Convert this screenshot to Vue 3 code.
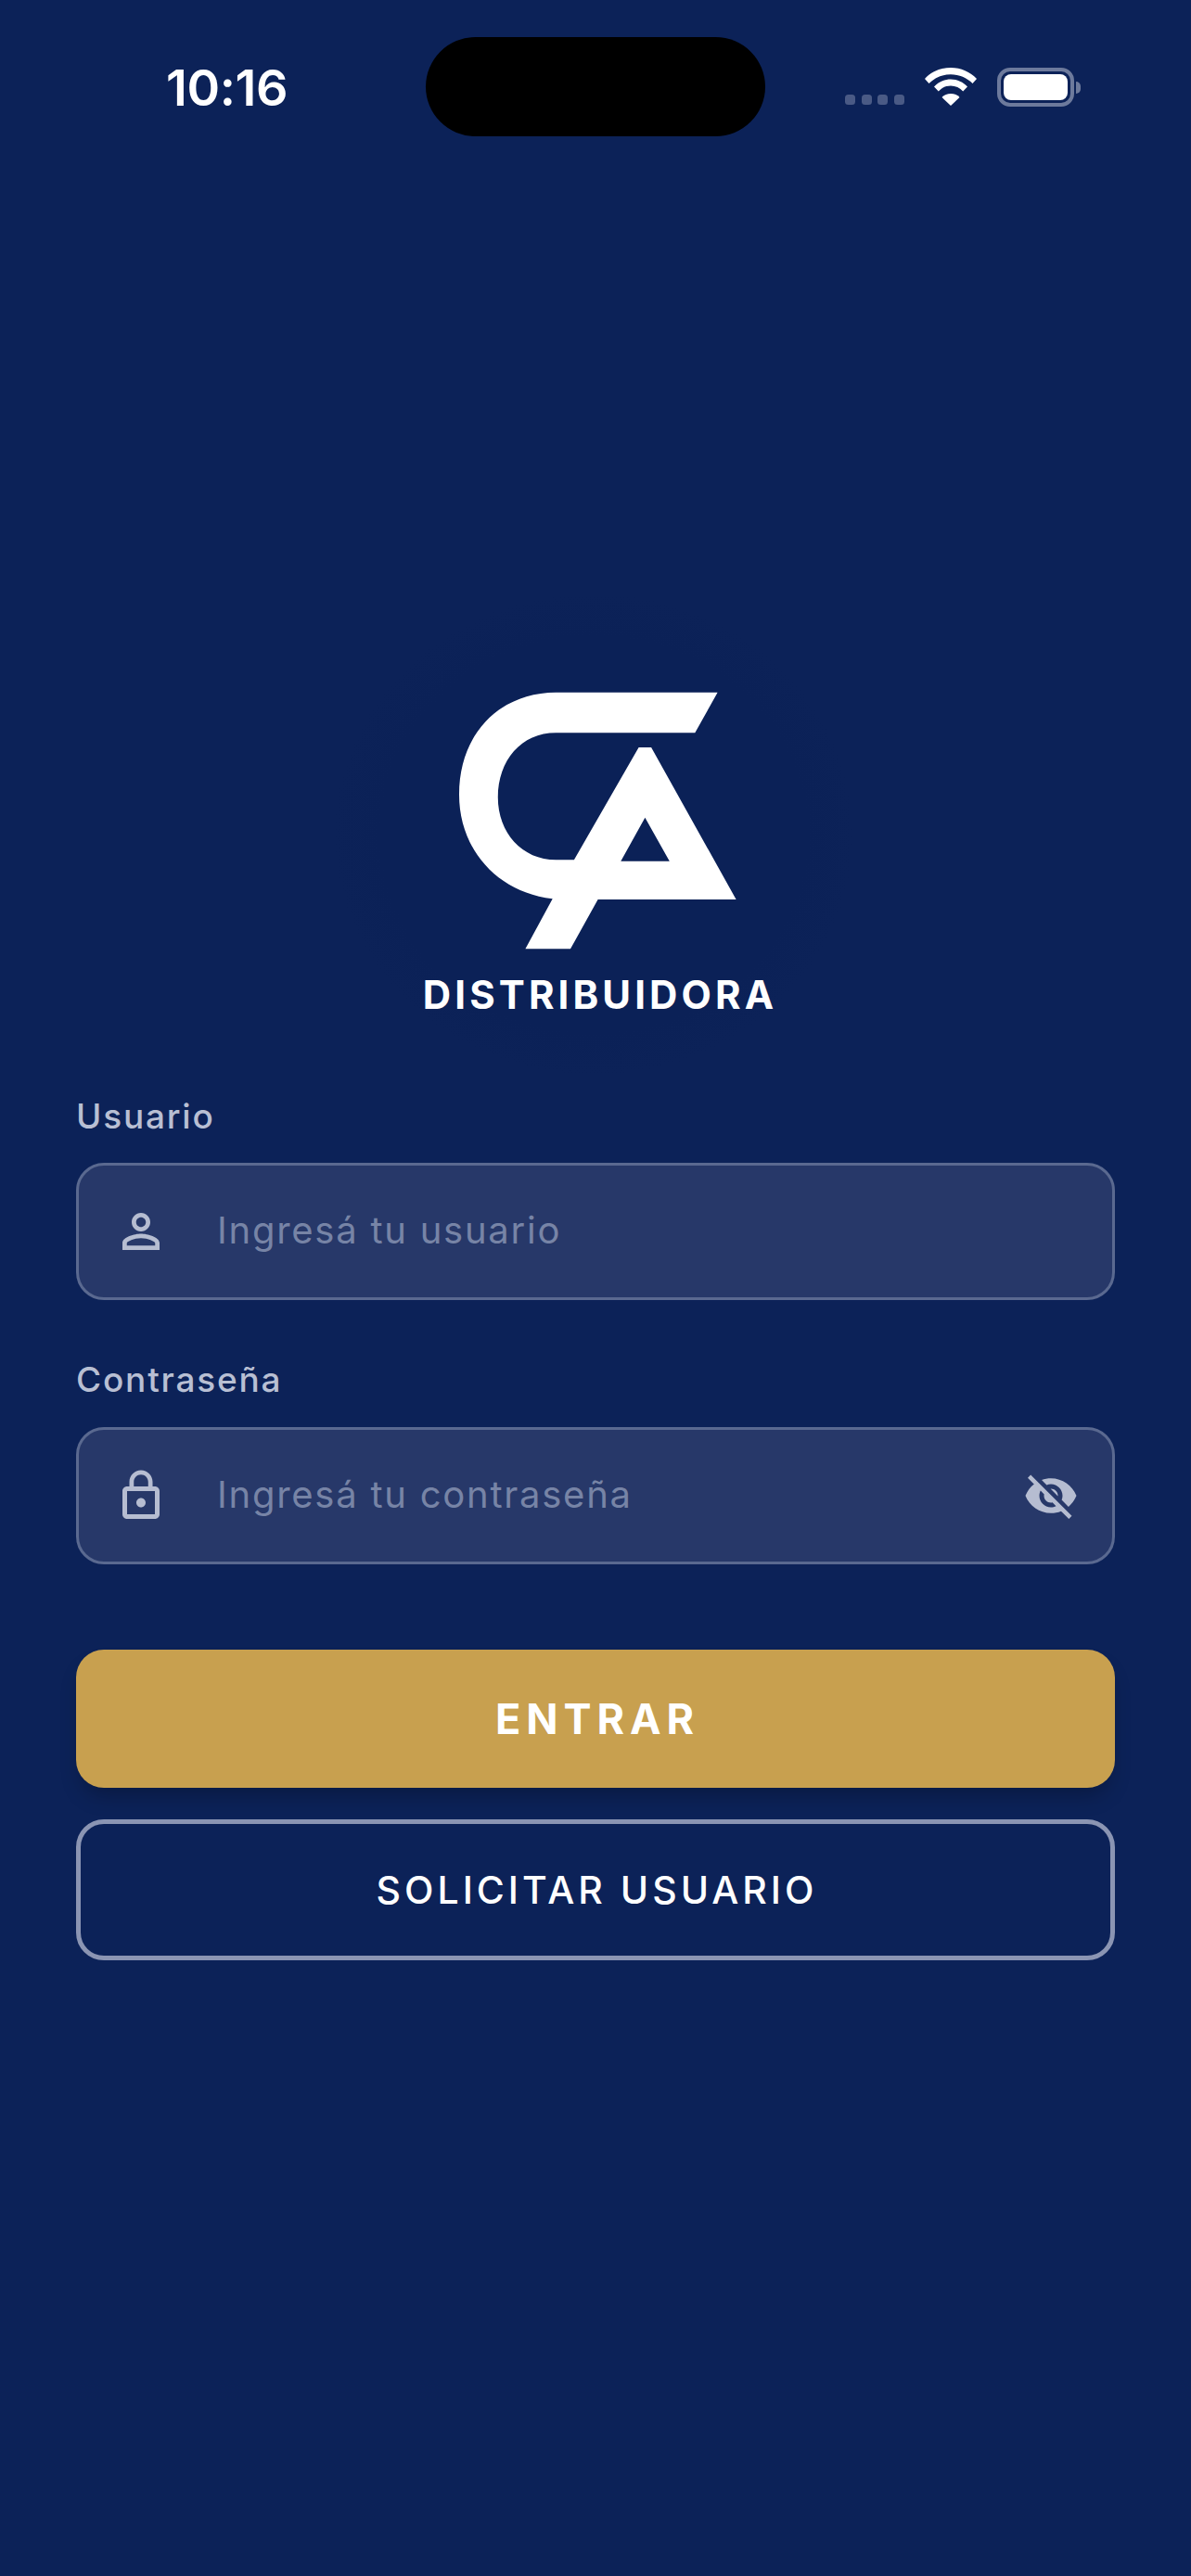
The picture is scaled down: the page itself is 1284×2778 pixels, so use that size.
<script setup>
const signalDots = [1, 2, 3, 4]
const personPath = 'M12 5.9c1.16 0 2.1.94 2.1 2.1s-.94 2.1-2.1 2.1S9.9 9.16 9.9 8s.94-2.1 2.1-2.1m0 9c2.97 0 6.1 1.46 6.1 2.1v1.1H5.9V17c0-.64 3.13-2.1 6.1-2.1M12 4C9.79 4 8 5.79 8 8s1.79 4 4 4 4-1.79 4-4-1.79-4-4-4zm0 9c-2.67 0-8 1.34-8 4v3h16v-3c0-2.66-5.33-4-8-4z'
const lockPath = 'M12 17c1.1 0 2-.9 2-2s-.9-2-2-2-2 .9-2 2 .9 2 2 2zm6-9h-1V6c0-2.76-2.24-5-5-5S7 3.24 7 6v2H6c-1.1 0-2 .9-2 2v10c0 1.1.9 2 2 2h12c1.1 0 2-.9 2-2V10c0-1.1-.9-2-2-2zM8.9 6c0-1.71 1.39-3.1 3.1-3.1s3.1 1.39 3.1 3.1v2H8.9V6zM18 20H6V10h12v10z'
const eyeOffPath = 'M12 7c2.76 0 5 2.24 5 5 0 .65-.13 1.26-.36 1.83l2.92 2.92c1.51-1.26 2.7-2.89 3.43-4.75-1.73-4.39-6-7.5-11-7.5-1.4 0-2.74.25-3.98.7l2.16 2.16C10.74 7.13 11.35 7 12 7zM2 4.27l2.28 2.28.46.46C3.08 8.3 1.78 10.02 1 12c1.73 4.39 6 7.5 11 7.5 1.55 0 3.03-.3 4.38-.84l.42.42L19.73 22 21 20.73 3.27 3 2 4.27zM7.53 9.8l1.55 1.55c-.05.21-.08.43-.08.65 0 1.66 1.34 3 3 3 .22 0 .44-.03.65-.08l1.55 1.55c-.67.33-1.41.53-2.2.53-2.76 0-5-2.24-5-5 0-.79.2-1.53.53-2.2zm4.31-.78l3.15 3.15.02-.16c0-1.66-1.34-3-3-3l-.17.01z'
</script>

<template>
  <div class="screen">
    <header class="status-bar">
      <span class="time">10:16</span>
      <div class="island"></div>
      <div class="status-icons">
        <div class="dots">
          <span v-for="d in signalDots" :key="d" class="dot"></span>
        </div>
        <svg class="wifi" width="56" height="41" viewBox="0 0 56 41">
          <path fill="#fff" d="M28 0C39 0 49 4.5 56 12L51.5 17C45.5 11 37 7.3 28 7.3C19 7.3 10.5 11 4.5 17L0 12C7 4.5 17 0 28 0Z" />
          <path fill="#fff" d="M28 12.5C35 12.5 41.5 15.5 46 20.5L41.2 25.5C38 21.5 33 19.5 28 19.5C23 19.5 18 21.5 14.8 25.5L10 20.5C14.5 15.5 21 12.5 28 12.5Z" />
          <path fill="#fff" d="M28 28C32 28 35.5 29.5 37.5 32L28 41L18.5 32C20.5 29.5 24 28 28 28Z" />
        </svg>
        <div class="battery"><div class="battery-fill"></div></div>
        <div class="battery-nub"></div>
      </div>
    </header>

    <div class="logo">
      <svg class="logo-mark" width="560" height="384" viewBox="0 0 560 384">
        <path
          fill="#fff"
          fill-rule="evenodd"
          d="M413.6 106.7L389.3 150.3H239.3C202 150.3 176.8 180 176.8 220C176.8 258 203 287.3 239.3 287.3H258.9L328.6 166H342.1L433.6 330H284.6L255 383.3H206.4L235.7 329.3C175 322 135 275 135 217C135 150 180 106.7 239.3 106.7ZM335.4 241.7L309.3 288.7H361.8Z"
        />
      </svg>
      <span class="logo-text">DISTRIBUIDORA</span>
    </div>

    <form class="form" @submit.prevent>
      <label class="label">Usuario</label>
      <div class="field">
        <svg class="icon" viewBox="0 0 24 24"><path :d="personPath" /></svg>
        <input class="input" type="text" placeholder="Ingresá tu usuario" />
      </div>

      <label class="label label-second">Contraseña</label>
      <div class="field">
        <svg class="icon" viewBox="0 0 24 24"><path :d="lockPath" /></svg>
        <input class="input" type="password" placeholder="Ingresá tu contraseña" />
        <svg class="icon" viewBox="0 0 24 24"><path :d="eyeOffPath" /></svg>
      </div>

      <button class="btn-primary" type="submit">ENTRAR</button>
      <button class="btn-outline" type="button">SOLICITAR USUARIO</button>
    </form>
  </div>
</template>

<style>
html,
body {
  margin: 0;
  background: #0c2258;
}
</style>

<style scoped>
.screen {
  width: 1284px;
  height: 2778px;
  background: #0c2258;
  font-family: Inter, "Liberation Sans", sans-serif;
  overflow: hidden;
}

.status-bar {
  display: flex;
  align-items: flex-start;
  height: 147px;
  padding-top: 40px;
  box-sizing: border-box;
}
.time {
  width: 459px;
  box-sizing: border-box;
  padding-left: 179px;
  margin-top: 23px;
  font-size: 54px;
  line-height: 64px;
  font-weight: 600;
  letter-spacing: -0.4px;
  color: #fff;
}
.island {
  width: 366px;
  height: 107px;
  border-radius: 54px;
  background: #000;
}
.status-icons {
  display: flex;
  align-items: flex-end;
  padding-left: 86px;
  height: 74px;
}
.dots {
  display: flex;
  gap: 6.5px;
  margin-bottom: 1px;
}
.dot {
  width: 11px;
  height: 11px;
  border-radius: 3.5px;
  background: #4a5a85;
}
.wifi {
  margin-left: 22px;
}
.battery {
  margin-left: 22px;
  width: 83px;
  height: 42px;
  box-sizing: border-box;
  border: 4px solid #6d7a9c;
  border-radius: 14px;
  padding: 3px;
  margin-bottom: -1px;
}
.battery-fill {
  height: 100%;
  background: #fff;
  border-radius: 8px;
}
.battery-nub {
  width: 5px;
  height: 13px;
  margin: 0 0 13px 2px;
  background: #6d7a9c;
  border-radius: 0 5px 5px 0;
}

.logo {
  display: flex;
  flex-direction: column;
  align-items: center;
  width: 560px;
  height: 520px;
  margin: 493px 0 0 360px;
  background: radial-gradient(closest-side, #0b2157 82%, #0c2258);
}
.logo-mark {
  display: block;
}
.logo-text {
  margin: 24px 0 0 14px;
  font-size: 42px;
  line-height: 50px;
  font-weight: 700;
  letter-spacing: 4.1px;
  color: #fff;
}

.form {
  display: flex;
  flex-direction: column;
  padding: 22px 82px 0;
}
.label {
  font-size: 37px;
  line-height: 44px;
  font-weight: 550;
  letter-spacing: 1.8px;
  color: #b8bfd3;
  margin-bottom: 28px;
}
.label-second {
  margin-top: 64px;
  margin-bottom: 29px;
}
.field {
  display: flex;
  align-items: center;
  gap: 52px;
  height: 148px;
  box-sizing: border-box;
  padding: 0 36px 0 37px;
  border: 3px solid #5a6990;
  border-radius: 30px;
  background: #273869;
}
.icon {
  width: 60px;
  height: 60px;
  flex: none;
  fill: #b6bdd1;
}
.input {
  flex: 1;
  min-width: 0;
  padding: 0 0 3px;
  border: none;
  outline: none;
  background: transparent;
  font-family: inherit;
  font-size: 40px;
  letter-spacing: 1.75px;
  color: #fff;
}
.input::placeholder {
  color: #7784a6;
  opacity: 1;
}

.btn-primary {
  height: 149px;
  margin-top: 92px;
  padding: 0 0 0 4px;
  border: none;
  border-radius: 30px;
  background: #c8a04f;
  box-shadow: 0 14px 22px -6px rgba(0, 0, 0, 0.26);
  font-family: inherit;
  font-size: 45px;
  font-weight: 700;
  letter-spacing: 5.9px;
  color: #fff;
}
.btn-outline {
  height: 152px;
  margin-top: 34px;
  padding: 0 0 0 3px;
  box-sizing: border-box;
  border: 5px solid #8b95b3;
  border-radius: 30px;
  background: transparent;
  font-family: inherit;
  font-size: 41px;
  font-weight: 500;
  letter-spacing: 4px;
  color: #fff;
}
</style>
